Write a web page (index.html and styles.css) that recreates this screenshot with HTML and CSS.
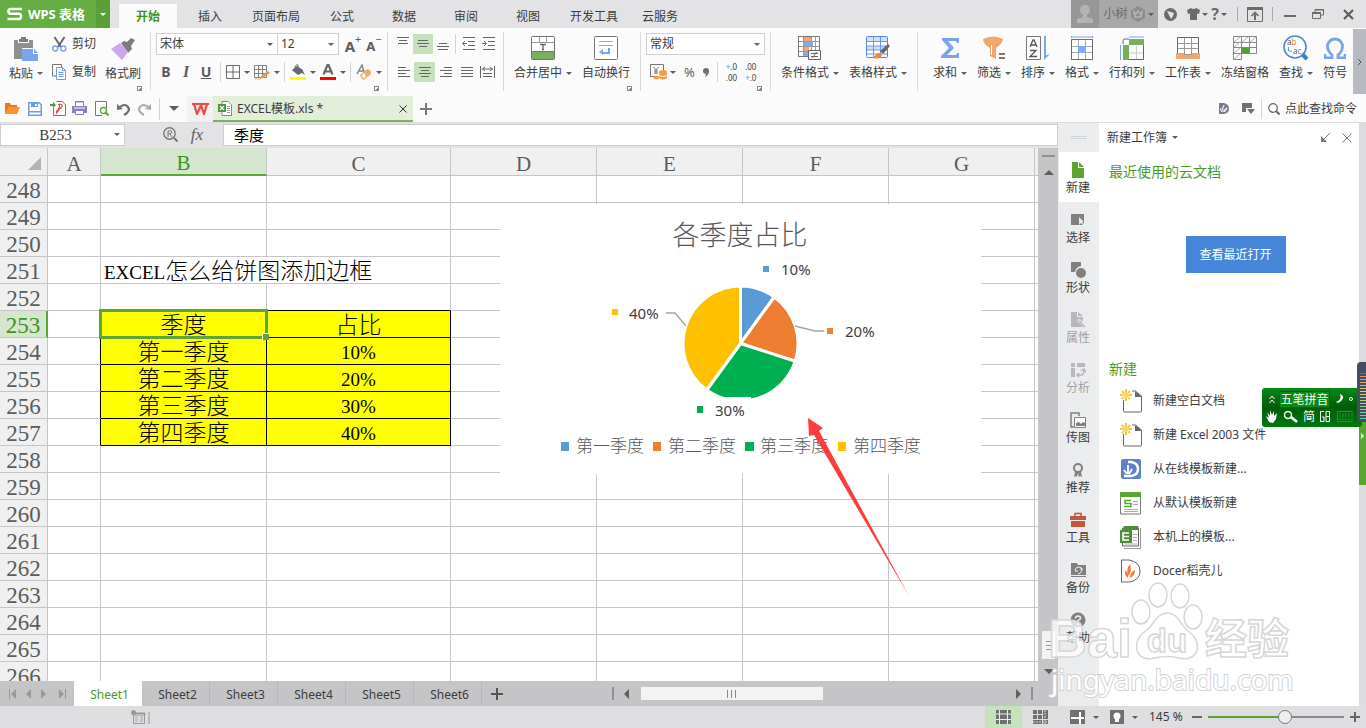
FILE: index.html
```html
<!DOCTYPE html>
<html lang="zh-CN">
<head>
<meta charset="utf-8">
<title>EXCEL模板.xls - WPS 表格</title>
<link rel="stylesheet" href="styles.css">
</head>
<body>
<header class="titlebar">
  <button class="brand"><svg width="16" height="14" viewBox="0 0 16 14"><path d="M15 2H3.500Q1.500 2 1.500 4.300T3.500 6.800H12Q14 6.800 14 9.300T12 12H0.500" fill="none" stroke="#fff" stroke-width="2.600"/></svg><span>WPS 表格</span></button>
  <button class="brand-more" aria-label="菜单"><i class="caret light"></i></button>
  <nav class="menu">
    <button class="active">开始</button><button>插入</button><button>页面布局</button><button>公式</button><button>数据</button><button>审阅</button><button>视图</button><button>开发工具</button><button>云服务</button>
  </nav>
  <div class="window-tools">
    <button class="avatar" aria-label="头像"><svg width="18" height="20" viewBox="0 0 18 20"><circle cx="9" cy="6" r="5" fill="#b4b4b4"/><path d="M7 9h4v4l6 2v4H1v-4l6-2z" fill="#b4b4b4"/></svg></button>
    <button class="user">小树 <svg width="14" height="16" viewBox="0 0 14 16"><path d="M7 0l7 4v8l-7 4-7-4V4z" fill="#8e8e8e"/><path d="M3 6l2 2 2-3 2 3 2-2-1 5H4z" fill="none" stroke="#b5b5b5" stroke-width="1.300"/></svg><i class="caret"></i></button>
    <button class="w20" aria-label="皮肤"><svg width="13" height="13" viewBox="0 0 13 13"><circle cx="6.500" cy="6.500" r="6.500" fill="#6b6b6b"/><path d="M3 3l4 1 3 1-1 3-2 3-2-4z" fill="#e3e3e5"/></svg></button>
    <button class="shirt w24" aria-label="换装"><svg width="13" height="12" viewBox="0 0 13 12"><path d="M4 0Q6.500 2 9 0l4 2-1 4-2-.5V12H3V5.500L1 6 0 2z" fill="#6b6b6b"/></svg><i class="caret"></i></button>
    <button class="w20 help" aria-label="帮助">?<i class="caret"></i></button>
    <i class="bar first"></i>
    <button class="w32" aria-label="收起功能区"><svg width="16" height="15" viewBox="0 0 16 15"><path d="M.5 1h15v13.500H.500z" fill="none" stroke="#6b6b6b"/><path d="M0 0h16v3H0zM7 7h2v6H7z" fill="#6b6b6b"/><path d="M4.500 9L8 5.500 11.500 9" fill="none" stroke="#6b6b6b" stroke-width="1.600"/></svg></button>
    <i class="bar"></i>
    <button class="w32" aria-label="最小化"><svg width="12" height="12" viewBox="0 0 12 12"><path d="M0 7h12v2H0z" fill="#6b6b6b"/></svg></button>
    <button class="w24" aria-label="还原"><svg width="12" height="11" viewBox="0 0 12 11"><path d="M3 3V.500h8.500V6H9M.500 4H8.500v5.500H.500z" fill="none" stroke="#6b6b6b"/><path d="M0 3h9v2H0zM3 0h9v1.500H3z" fill="#6b6b6b"/></svg></button>
    <button class="w36" aria-label="关闭"><svg width="11" height="11" viewBox="0 0 11 11"><path d="M1 1l9 9M10 1l-9 9" stroke="#5e5e5e" stroke-width="2.200"/></svg></button>
  </div>
</header>

<section class="ribbon">
  <div class="group clip">
    <div class="row">
      <button class="big"><span class="ico"><svg width="24" height="24" viewBox="0 0 24 24"><path d="M0 3h4v3h11V3h4v8H8v11H0z" fill="#909090"/><path d="M5 5V2h2V0h5v2h2v3z" fill="#7c7c7c"/><path d="M8 12h11v5h5v7H8z" fill="#7ba4ee"/><path d="M20 12l4 4h-4z" fill="#7ba4ee"/></svg></span><span class="cap">粘贴<i class="caret"></i></span></button>
      <div class="pair">
        <button><svg width="15" height="16" viewBox="0 0 15 16"><path d="M2.500 1l6.500 10M12.500 1L6 11" stroke="#686868" stroke-width="2"/><circle cx="3.200" cy="12.500" r="2.500" fill="none" stroke="#7ba4ee" stroke-width="1.400"/><circle cx="11.300" cy="12.500" r="2.500" fill="none" stroke="#7ba4ee" stroke-width="1.400"/></svg>剪切</button>
        <button><svg width="15" height="16" viewBox="0 0 15 16"><path d="M4 12H.500V.500h9V3" fill="none" stroke="#757575"/><path d="M4.500 3.500h6l3 3v9h-9z" fill="#fff" stroke="#6f9bea"/><path d="M10.500 3.500v3h3M6.500 8.500h5M6.500 10.500h5M6.500 12.500h5" fill="none" stroke="#6f9bea"/></svg>复制</button>
      </div>
      <button class="big"><span class="ico"><svg width="24" height="24" viewBox="0 0 24 24"><path d="M10 6l3-2 3 1 4-4 4 2-4 6 1 3-4 4z" fill="#7c7c7c"/><path d="M9 6l8 9-6 8L0 12z" fill="#cda6f2"/></svg></span><span class="cap">格式刷</span></button>
    </div>
    <button class="launch" aria-label="剪贴板选项"></button>
  </div>
  <i class="sep"></i>
  <div class="group font">
    <div class="rows">
      <div class="row top">
        <label class="pick family"><select aria-label="字体"><option>宋体</option></select><i class="caret"></i></label><label class="pick size"><select aria-label="字号"><option>12</option></select><i class="caret"></i></label>
        <button class="w20 grow"><b>A</b><sup>+</sup></button><button class="w20 shrink"><b>A</b><sup>−</sup></button>
      </div>
      <div class="row tools">
        <span class="biu"><button class="b">B</button><button class="i">I</button><button class="u">U</button></span>
        <i class="bar"></i>
        <button aria-label="边框"><svg width="14" height="14" viewBox="0 0 14 14"><path d="M.5.5h13v13H.5zM7 .5v13M.5 7h13" fill="none" stroke="#6b6b6b"/></svg><i class="caret"></i></button>
        <button aria-label="绘图边框"><svg width="16" height="15" viewBox="0 0 16 15"><path d="M.5.5h12v12H.5zM4.500.500v12M8.500.500v12M.5 4.500h12M.5 8.500h12" fill="none" stroke="#828282"/><path d="M6 14l1-3 7-5 2 2-7 5z" fill="#f09452"/><path d="M1 14h5" stroke="#f09452" stroke-dasharray="2 1"/></svg><i class="caret"></i></button>
        <i class="bar"></i>
        <button aria-label="填充颜色"><svg width="16" height="16" viewBox="0 0 16 16"><path d="M2 6l5-4 6 4v1l2 4-3-2-4 2-5-4z" fill="#686868"/><path d="M5 5q0-5 3-4v4" fill="none" stroke="#686868"/><path d="M0 13h16v3H0z" fill="#ff0"/></svg><i class="caret"></i></button>
        <button aria-label="字体颜色"><svg width="16" height="16" viewBox="0 0 16 16"><path d="M3.500 10.500L7.500 1h1l4 9.500M5 7.500h6" fill="none" stroke="#686868" stroke-width="2.200"/><path d="M0 13h16v3H0z" fill="#f00"/></svg><i class="caret"></i></button>
        <i class="bar"></i>
        <button aria-label="清除格式"><svg width="16" height="16" viewBox="0 0 16 16"><path d="M1 10L6 1l2 7M3 7h4" fill="none" stroke="#858585" stroke-width="1.500"/><path d="M5 11l6-5q4 0 3 4l-6 5q-3-1-3-4z" fill="#fff" stroke="#efac68" stroke-width="1.500"/><path d="M8 8l6-2v4l-4 3z" fill="#efac68"/></svg><i class="caret"></i></button>
      </div>
    </div>
    <button class="launch" aria-label="字体选项"></button>
  </div>
  <i class="sep"></i>
  <div class="group align">
    <div class="rows">
      <div class="row top">
        <button class="w20" aria-label="顶端对齐"><svg width="12" height="14" viewBox="0 0 12 14"><path d="M0 .5h12M2 3.500h8M1 6.500h10" stroke="#666"/></svg></button><button class="w20 on" aria-label="垂直居中"><svg width="12" height="14" viewBox="0 0 12 14"><path d="M1 3.500h10M0 6.500h12M2 9.500h8" stroke="#666"/></svg></button><button class="w20" aria-label="底端对齐"><svg width="12" height="14" viewBox="0 0 12 14"><path d="M2 6.500h8M0 9.500h12M1 12.500h10" stroke="#666"/></svg></button>
        <i class="bar"></i>
        <button class="w20" aria-label="减少缩进"><svg width="13" height="14" viewBox="0 0 13 14"><path d="M1 .5h12M6 4.500h7M6 8.500h7M1 12.500h12M1 6.500h4M3 4L.7 6.500 3 9" fill="none" stroke="#666"/></svg></button><button class="w20" aria-label="增加缩进"><svg width="13" height="14" viewBox="0 0 13 14"><path d="M1 .5h12M6 4.500h7M6 8.500h7M1 12.500h12M0 6.500h4M2 4l2.300 2.500L2 9" fill="none" stroke="#666"/></svg></button>
      </div>
      <div class="row low">
        <button class="w21" aria-label="左对齐"><svg width="12" height="12" viewBox="0 0 12 12"><path d="M0 1.500h8M0 4.500h12M0 7.500h8M0 10.500h12" stroke="#666"/></svg></button><button class="w21 on" aria-label="水平居中"><svg width="12" height="12" viewBox="0 0 12 12"><path d="M0 1.500h12M2 4.500h8M0 7.500h12M2 10.500h8" stroke="#666"/></svg></button><button class="w21" aria-label="右对齐"><svg width="12" height="12" viewBox="0 0 12 12"><path d="M4 1.500h8M0 4.500h12M4 7.500h8M0 10.500h12" stroke="#666"/></svg></button><button class="w21" aria-label="两端对齐"><svg width="12" height="12" viewBox="0 0 12 12"><path d="M0 1.500h12M0 4.500h12M0 7.500h12M0 10.500h12" stroke="#666"/></svg></button><button class="w21" aria-label="分散对齐"><svg width="15" height="12" viewBox="0 0 15 12"><path d="M.5 0v12M14.500 0v12M3 7.500h9M3 10.500h9M2 3h11M5 1L2.500 3 5 5M10 1l2.500 2L10 5" fill="none" stroke="#666"/></svg></button>
      </div>
    </div>
  </div>
  <i class="sep"></i>
  <div class="group merge">
    <div class="row gap10">
      <button class="big"><span class="ico"><svg width="24" height="24" viewBox="0 0 24 24"><rect x=".5" y=".5" width="23" height="23" rx="1" fill="#fff" stroke="#737373"/><path d="M1 6.500h22M8.500 1v5M15.500 1v5" stroke="#999"/><path d="M1 16h22v7H1z" fill="#79ae5c"/><path d="M0 15.500h24" stroke="#5b9039"/><path d="M9 8.500h6M12 8.500v5M11 13.500h2" stroke="#666" stroke-width="1.300"/></svg></span><span class="cap">合并居中<i class="caret"></i></span></button>
      <button class="big"><span class="ico"><svg width="24" height="24" viewBox="0 0 24 24"><rect x=".5" y=".5" width="23" height="23" rx="1" fill="#fff" stroke="#737373"/><path d="M5 5.500h14M5 9.500h14" stroke="#aaa"/><path d="M15 12v5H8" fill="none" stroke="#7ba4ee" stroke-width="2"/><path d="M9 13v6l-4-3z" fill="#7ba4ee"/></svg></span><span class="cap">自动换行</span></button>
    </div>
    <button class="launch" aria-label="对齐选项"></button>
  </div>
  <i class="sep"></i>
  <div class="group number">
    <div class="rows">
      <div class="row top"><label class="pick fmt"><select aria-label="数字格式"><option>常规</option></select><i class="caret"></i></label></div>
      <div class="row numtools">
        <button aria-label="货币"><svg width="17" height="16" viewBox="0 0 17 16"><path d="M5 12.500H.5V.5h13V6" fill="none" stroke="#777"/><path d="M3.500 3L6 6l2.500-3M6 6v4M4 7h4M4 9h4" fill="none" stroke="#777"/><g fill="#f29a3c"><ellipse cx="13" cy="8" rx="4" ry="2"/><path d="M9 9q4 2 8 0v2q-4 2-8 0zM9 12q4 2 8 0v2q-4 3-8 0z"/><ellipse cx="6.500" cy="13.500" rx="3" ry="1.800"/></g></svg><i class="caret"></i></button>
        <button class="pct">%</button>
        <button aria-label="千位分隔"><svg width="6" height="9" viewBox="0 0 6 9"><path d="M3 0q3 0 3 3 0 4-4 6 1-2 1-3Q0 6 0 3t3-3z" fill="#707070"/></svg></button>
        <i class="bar"></i>
        <button class="dec"><span><em>+</em>.0</span><span>.00</span></button>
        <button class="dec"><span>.00</span><span><em>+</em>.0</span></button>
      </div>
    </div>
    <button class="launch" aria-label="数字选项"></button>
  </div>
  <i class="sep"></i>
  <div class="group styles">
    <div class="row gap10">
      <button class="big"><span class="ico"><svg width="24" height="24" viewBox="0 0 24 24"><path d="M.5.5h21v20H.5zM5.500.500v20M13.500.500v20M.5 5.500h21M.5 10.500h21M.5 15.500h21M17.500.500v20" fill="#fff" stroke="#999"/><path d="M6 1h7v4H6zM6 11h5v4H6z" fill="#f7a568"/><path d="M6 6h9v4H6zM6 16h4v4H6z" fill="#7fadf5"/><path d="M.5.5h21v20H.5z" fill="none" stroke="#777"/><path d="M10.500 14.500h12v9h-12z" fill="#fff" stroke="#666"/><path d="M13 17.500h7M13 20.500h7M18.500 16l-4 6" stroke="#666"/></svg></span><span class="cap">条件格式<i class="caret"></i></span></button>
      <button class="big"><span class="ico"><svg width="24" height="24" viewBox="0 0 24 24"><rect x=".5" y=".5" width="21" height="21" rx="1" fill="#fff" stroke="#5486de"/><path d="M1 1h20v4H1zM1 10h20v4H1z" fill="#d2e1fa"/><path d="M7.500 1v20M14.500 1v20M1 5.500h20M1 10h20M1 14h20M1 18h20" stroke="#6d9ae4"/><path d="M14 15l8-7 2 2-7 8z" fill="#686868"/><path d="M7 22q4-6 7-5l2 2q-2 5-9 3z" fill="#ec8a3b"/></svg></span><span class="cap">表格样式<i class="caret"></i></span></button>
    </div>
  </div>
  <i class="sep"></i>
  <div class="group edit">
    <div class="row gap10">
      <button class="big"><span class="ico"><svg width="19" height="22" viewBox="0 0 19 22"><path d="M1 1h17v5h-2q0-2-3-2H7l6 7-7 7h7q3 0 3-2h2v5H0v-2l8-8L1 3z" fill="#7ba4ee"/></svg></span><span class="cap">求和<i class="caret"></i></span></button>
      <button class="big"><span class="ico"><svg width="23" height="24" viewBox="0 0 23 24"><path d="M0 3q10-5 20 0 0 4-7 9v11l-6-3V12Q0 8 0 3z" fill="#f1a66b"/><path d="M8.500 9v10" stroke="#fff"/><path d="M16 17h6v2h-6zM16 21h6v2h-6z" fill="#777"/></svg></span><span class="cap">筛选<i class="caret"></i></span></button>
      <button class="big"><span class="ico"><svg width="24" height="24" viewBox="0 0 24 24"><path d="M.5.500h14v23H.500z" fill="#fff" stroke="#777"/><path d="M4 11l3-7h1l3 7M5 9h5M4 14.500h6L4 20.500h7" fill="none" stroke="#555" stroke-width="1.300"/><path d="M19 0v22" stroke="#7ba4ee" stroke-width="2"/><path d="M18 24v-4l6-2z" fill="#7ba4ee"/></svg></span><span class="cap">排序<i class="caret"></i></span></button>
      <button class="big"><span class="ico"><svg width="22" height="24" viewBox="0 0 22 24"><path d="M.5 3.500h21v20H.5zM7.500 3.500v20M14.500 3.500v20M.5 10.500h21M.5 16.500h21" fill="#fff" stroke="#aaa"/><path d="M.5 3.500h21v20H.5z" fill="none" stroke="#6d6d6d"/><path d="M7 10h8v7H7z" fill="#7fadf5"/><path d="M0 1h22M.5 0v2M21.500 0v2" stroke="#7ba4ee"/></svg></span><span class="cap">格式<i class="caret"></i></span></button>
      <button class="big"><span class="ico"><svg width="24" height="24" viewBox="0 0 24 24"><path d="M3 8V5q0-2 2-2h4M23.500 9v14.500H9" fill="none" stroke="#666"/><path d="M9 17h14M16.500 10v13" stroke="#ccc"/><path d="M9 3h15v6H9zM3 9h6v15H3z" fill="#79ae5c"/><path d="M9 1h15M.500 9v15" stroke="#7ba4ee"/></svg></span><span class="cap">行和列<i class="caret"></i></span></button>
      <button class="big"><span class="ico"><svg width="24" height="24" viewBox="0 0 24 24"><path d="M1.500 1.500h21v17h-21zM8.500 1v17M15.500 1v17M1.500 7.500h21M1.500 12.500h21" fill="#fff" stroke="#999"/><path d="M1.500 18V1.500h21V18" fill="none" stroke="#666"/><path d="M0 17h8v2h8v-2h8v6H0z" fill="#f1a66b"/></svg></span><span class="cap">工作表<i class="caret"></i></span></button>
      <button class="big"><span class="ico"><svg width="24" height="24" viewBox="0 0 24 24"><path d="M.5 23.500V.500h23v17H8.500v6zM8.500.500v17M16.500.500v17M.5 6.500h23M.5 11.500h23M.500 17.500h8" fill="#fff" stroke="#888"/><path d="M1 6l6-5M9 6l6-5M17 6l6-5M1 11l6-5M1 17l6-5M1 23l6-5" stroke="#aaa"/><path d="M9 12h7v5H9z" fill="#5c9a3c"/></svg></span><span class="cap">冻结窗格</span></button>
      <button class="big"><span class="ico"><svg width="26" height="26" viewBox="0 0 26 26"><circle cx="12" cy="12" r="11" fill="#fff" stroke="#4a87dc" stroke-width="1.600"/><path d="M19 19l5 5" stroke="#3d7fd8" stroke-width="4"/><text x="4" y="10" font-size="8" fill="#555">a<tspan fill="#e08438">b</tspan></text><text x="10" y="19" font-size="8" fill="#555">a<tspan fill="#5b8de0">c</tspan></text><path d="M5.500 12v4H9" fill="none" stroke="#5b8de0"/></svg></span><span class="cap">查找<i class="caret"></i></span></button>
      <button class="big"><span class="ico"><svg width="22" height="22" viewBox="0 0 22 22"><path d="M1 17v4h7v-3Q3 14 3.500 8q2-6 7.500-6t7.500 6q.5 6-4.500 10v3h7v-4" fill="none" stroke="#7ba4ee" stroke-width="2.800"/></svg></span><span class="cap">符号</span></button>
    </div>
  </div>
  <button class="ribbon-next" aria-label="更多"><svg width="5" height="8" viewBox="0 0 5 8"><path d="M1 1l3 3-3 3" fill="none" stroke="#555"/></svg></button>
</section>

<section class="quick">
  <div class="quick-icons">
    <button aria-label="打开"><svg width="15" height="13" viewBox="0 0 15 13"><path d="M0 12V1h5l1 2h6v3H4z" fill="#e77a1e"/><path d="M4 5h11l-3 7H0z" fill="#f8932f"/></svg></button>
    <button aria-label="保存"><svg width="14" height="14" viewBox="0 0 14 14"><path d="M.75.750h10.500l2 2v10.500H.750z" fill="#fff" stroke="#6e9aea" stroke-width="1.500"/><path d="M3 1h7v4H3zM1 9h12v1.500H1z" fill="#6e9aea"/><path d="M7 2h2v2H7z" fill="#fff"/></svg></button>
    <button aria-label="输出PDF"><svg width="16" height="15" viewBox="0 0 16 15"><path d="M3.500 7v7.500h12V4l-3-3.500h-6" fill="#fff" stroke="#777"/><path d="M0 3h3V1l3 3-3 3V5H0z" fill="#579a38"/><path d="M8 3.500q5-1 4 2T8 7.500M9.500 4q0 5-3 8 0-4 3-3" fill="none" stroke="#d74b46" stroke-width="1.200"/></svg></button>
    <button aria-label="打印"><svg width="15" height="15" viewBox="0 0 15 15"><path d="M3 0h9v5h3v7H0V5h3z" fill="#8380c8"/><path d="M4 1.500h7V5H4zM3 9h9v5H3z" fill="#fff"/><path d="M3.500 9.500h8v4h-8z" fill="#fff" stroke="#8380c8"/><path d="M2 7h11" stroke="#fff"/></svg></button>
    <button aria-label="打印预览"><svg width="14" height="15" viewBox="0 0 14 15"><path d="M7 14.500H.5V.5h11V7" fill="#fff" stroke="#777"/><circle cx="8.500" cy="9.500" r="3" fill="#fff" stroke="#5fa13e" stroke-width="1.300"/><path d="M10.500 11.500L13.500 14.500" stroke="#5fa13e" stroke-width="2"/></svg></button>
    <button aria-label="撤销"><svg width="13" height="14" viewBox="0 0 13 14"><path d="M3 5q5-4 8 0t-4 8" fill="none" stroke="#707070" stroke-width="2.200"/><path d="M0 2l6 5-6 1z" fill="#707070"/></svg></button>
    <button aria-label="恢复"><svg width="13" height="14" viewBox="0 0 13 14"><path d="M10 5Q5 1 2 5t4 8" fill="none" stroke="#adadad" stroke-width="2.200"/><path d="M13 2L7 7l6 1z" fill="#adadad"/></svg></button>
  </div>
  <i class="bar tall"></i>
  <button class="more" aria-label="自定义"><i class="caret large"></i></button>
  <button class="home" aria-label="WPS 首页"><svg width="17" height="12" viewBox="0 0 17 12"><path d="M0 1h8M8 1h9M2 1l3 10 4-9 3 9 3-10" fill="none" stroke="#ea4b49" stroke-width="2.200"/></svg></button>
  <div class="doc"><svg width="14" height="15" viewBox="0 0 14 15"><path d="M4 .5h6l3.500 3.500v10.500H4z" fill="#fff" stroke="#888"/><path d="M9 5.500h3M9 7.500h3M9 9.500h3M9 11.500h3" stroke="#999"/><path d="M0 3h8v8H0z" fill="#4b9638"/><path d="M2 5l4 4M6 5l-4 4" stroke="#fff" stroke-width="1.300"/></svg><span>EXCEL模板.xls *</span><button aria-label="关闭文档"><svg width="8" height="8" viewBox="0 0 8 8"><path d="M.5.5l7 7M7.500.500l-7 7" stroke="#333"/></svg></button></div>
  <button class="plus" aria-label="新建标签"><svg width="12" height="12" viewBox="0 0 12 12"><path d="M5 0h2v5h5v2H7v5H5V7H0V5h5z" fill="#7a7a7a"/></svg></button>
  <div class="find">
    <button aria-label="Docer"><svg width="10" height="11" viewBox="0 0 10 11"><path d="M0 0h5q5 1 5 5.500T5 11H0z" fill="#787d90"/><path d="M3 9Q1 7 2 5M4 9q-1-4 1-7M5 9q0-3 3-4-1 3-3 4" fill="none" stroke="#fff"/></svg></button>
    <button aria-label="窗口"><svg width="13" height="11" viewBox="0 0 13 11"><path d="M0 0h10v5H4v4H0z" fill="#707070"/><path d="M5 6h8l-4 5z" fill="#707070"/></svg></button>
    <i class="bar"></i>
    <button class="search"><svg width="12" height="12" viewBox="0 0 12 12"><circle cx="5" cy="5" r="4.300" fill="none" stroke="#666" stroke-width="1.200"/><path d="M8 8l3.500 3.500" stroke="#666" stroke-width="2"/></svg>点此查找命令</button>
  </div>
</section>

<main class="work">
  <div class="book">
    <div class="formula">
      <label class="namebox"><input aria-label="名称框" value="B253"><i class="caret"></i></label>
      <button aria-label="查找引用"><svg width="15" height="15" viewBox="0 0 15 15"><circle cx="6.500" cy="6.500" r="5.700" fill="none" stroke="#777" stroke-width="1.400"/><path d="M11 11l3.500 3.500" stroke="#777" stroke-width="2"/><path d="M5 10V4q4-1 4 1T5 7M7 7l2 3" fill="none" stroke="#777"/></svg></button>
      <button class="fx">fx</button>
      <input class="fxinput" aria-label="编辑栏" value="季度">
    </div>
    <div class="sheetrow">
      <div class="sheet">
        <table class="grid">
          <colgroup><col class="c-num"><col class="c-a"><col class="c-b"><col class="c-c"><col class="c-d"><col class="c-d"><col class="c-d"><col class="c-d"><col></colgroup>
          <thead><tr><th class="corner"><svg width="13" height="13" viewBox="0 0 13 13"><path d="M13 0v13H0z" fill="#b4b4b4"/></svg></th><th>A</th><th class="sel">B</th><th>C</th><th>D</th><th>E</th><th>F</th><th>G</th><th></th></tr></thead>
          <tbody>
          <tr><th>248</th><td></td><td></td><td></td><td></td><td></td><td></td><td></td><td></td></tr>
          <tr><th>249</th><td></td><td></td><td></td><td></td><td></td><td></td><td></td><td></td></tr>
          <tr><th>250</th><td></td><td></td><td></td><td></td><td></td><td></td><td></td><td></td></tr>
          <tr><th>251</th><td></td><td class="long" colspan="2"><span class="latin">EXCEL</span>怎么给饼图添加边框</td><td></td><td></td><td></td><td></td><td></td></tr>
          <tr class="before"><th>252</th><td></td><td></td><td></td><td></td><td></td><td></td><td></td><td></td></tr>
          <tr class="fill"><th class="sel">253</th><td></td><td class="cur">季度</td><td>占比</td><td></td><td></td><td></td><td></td><td></td></tr>
          <tr class="fill"><th>254</th><td></td><td>第一季度</td><td class="n">10%</td><td></td><td></td><td></td><td></td><td></td></tr>
          <tr class="fill"><th>255</th><td></td><td>第二季度</td><td class="n">20%</td><td></td><td></td><td></td><td></td><td></td></tr>
          <tr class="fill"><th>256</th><td></td><td>第三季度</td><td class="n">30%</td><td></td><td></td><td></td><td></td><td></td></tr>
          <tr class="fill"><th>257</th><td></td><td>第四季度</td><td class="n">40%</td><td></td><td></td><td></td><td></td><td></td></tr>
          <tr><th>258</th><td></td><td></td><td></td><td></td><td></td><td></td><td></td><td></td></tr>
          <tr><th>259</th><td></td><td></td><td></td><td></td><td></td><td></td><td></td><td></td></tr>
          <tr><th>260</th><td></td><td></td><td></td><td></td><td></td><td></td><td></td><td></td></tr>
          <tr><th>261</th><td></td><td></td><td></td><td></td><td></td><td></td><td></td><td></td></tr>
          <tr><th>262</th><td></td><td></td><td></td><td></td><td></td><td></td><td></td><td></td></tr>
          <tr><th>263</th><td></td><td></td><td></td><td></td><td></td><td></td><td></td><td></td></tr>
          <tr><th>264</th><td></td><td></td><td></td><td></td><td></td><td></td><td></td><td></td></tr>
          <tr><th>265</th><td></td><td></td><td></td><td></td><td></td><td></td><td></td><td></td></tr>
          <tr><th>266</th><td></td><td></td><td></td><td></td><td></td><td></td><td></td><td></td></tr>
          </tbody>
        </table>
        <svg class="chart" width="481" height="270" viewBox="0 0 481 270" role="img" aria-label="各季度占比">
          <rect width="481" height="270" fill="#fff"/>
          <text x="240" y="41" text-anchor="middle" font-size="27" fill="#595959">各季度占比</text>
          <g stroke="#fff" stroke-width="3" stroke-linejoin="round">
            <path d="M240.500 139.500V82A57.500 57.500 0 0 1 274.300 93z" fill="#5b9bd5"/>
            <path d="M240.500 139.500L274.300 93A57.500 57.500 0 0 1 295.200 157.300z" fill="#ed7d31"/>
            <path d="M240.500 139.500L295.200 157.300A57.500 57.500 0 0 1 206.700 186z" fill="#00b050"/>
            <path d="M240.500 139.500L206.700 186A57.500 57.500 0 0 1 240.500 82z" fill="#ffc000"/>
          </g>
          <rect x="196" y="193" width="55" height="24" fill="#fff"/>
          <path d="M166 109h9l11 13M295 122l20 5h9" fill="none" stroke="#a6a6a6" stroke-width="1.400"/>
          <path d="M263 62h6v6h-6z" fill="#5b9bd5"/><path d="M327 124h6v6h-6z" fill="#ed7d31"/><path d="M197 202h6v7h-6z" fill="#00b050"/><path d="M112 105h6v6h-6z" fill="#ffc000"/>
          <g class="labels" font-size="15" fill="#404040"><text x="281" y="71">10%</text><text x="345" y="133">20%</text><text x="215" y="212">30%</text><text x="129" y="115">40%</text></g>
          <path d="M61 238h8v9h-8z" fill="#5b9bd5"/><path d="M153 238h8v9h-8z" fill="#ed7d31"/><path d="M245 238h9v9h-9z" fill="#00b050"/><path d="M338 238h8v9h-8z" fill="#ffc000"/>
          <g font-size="17" fill="#595959"><text x="76" y="248">第一季度</text><text x="168" y="248">第二季度</text><text x="260" y="248">第三季度</text><text x="353" y="248">第四季度</text></g>
        </svg>
        <svg class="arrow" width="104" height="180" viewBox="0 0 104 180"><path d="M1 0l15 10-4 3 90 165-95-161-5 1z" fill="#fb3d3d"/></svg>
      </div>
      <div class="vscroll"><i class="split"></i><button aria-label="向上"><i class="tri up"></i></button><span class="vthumb"><i></i><i></i><i></i></span><button aria-label="向下"><i class="tri down"></i></button></div>
    </div>
    <div class="tabs">
      <div class="tabnav">
        <button aria-label="第一张"><svg width="8" height="10" viewBox="0 0 8 10"><path d="M0 0h1v10H0zM7 0v10L2 5z" fill="#999"/></svg></button><button aria-label="上一张"><svg width="6" height="10" viewBox="0 0 6 10"><path d="M5 0v10L0 5z" fill="#999"/></svg></button><button aria-label="下一张"><svg width="6" height="10" viewBox="0 0 6 10"><path d="M0 0v10l5-5z" fill="#999"/></svg></button><button aria-label="最后一张"><svg width="8" height="10" viewBox="0 0 8 10"><path d="M0 0v10l5-5zM6 0h1v10H6z" fill="#999"/></svg></button>
      </div>
      <button class="tab active">Sheet1</button><button class="tab">Sheet2</button><button class="tab">Sheet3</button><button class="tab">Sheet4</button><button class="tab">Sheet5</button><button class="tab">Sheet6</button>
      <button class="addtab" aria-label="新建工作表"><svg width="12" height="12" viewBox="0 0 12 12"><path d="M5 0h2v5h5v2H7v5H5V7H0V5h5z" fill="#555"/></svg></button>
      <div class="hscroll"><i class="grip"></i><button aria-label="向左"><i class="tri left"></i></button><span class="track"><span class="hthumb"><i></i><i></i><i></i></span></span><button aria-label="向右"><i class="tri right"></i></button><i class="grip"></i></div>
    </div>
  </div>
  <nav class="strip">
    <div class="handle"><i></i></div>
    <button class="active"><svg width="12" height="16" viewBox="0 0 12 16"><path d="M0 0h6v6h6v10H0zM7 0l5 5H7z" fill="#5aa532"/></svg>新建</button>
    <button><svg width="14" height="16" viewBox="0 0 14 16"><path d="M0 2h13v11H0z" fill="#808080"/><path d="M8 5v8l2-2 3 3 1-1-3-3h2z" fill="#ebeced"/></svg>选择</button>
    <button><svg width="15" height="16" viewBox="0 0 15 16"><path d="M0 0h10v4q-5 1-6 6H0z" fill="#808080"/><circle cx="10" cy="11" r="5" fill="#808080"/></svg>形状</button>
    <button disabled><svg width="15" height="16" viewBox="0 0 15 16"><path d="M0 0h6v5h6v10H0zM7 0l5 4H7z" fill="#b8b8ba"/><path d="M7 9q2-1 3 1l4 5" fill="none" stroke="#ebeced" stroke-width="3"/><path d="M8 9q2 0 2 2l4 4" fill="none" stroke="#b8b8ba" stroke-width="1.500"/></svg>属性</button>
    <button disabled><svg width="15" height="16" viewBox="0 0 15 16"><path d="M0 1h4v4H0zM6 1h8v4H6zM0 6h4v9H0z" fill="#b8b8ba"/><path d="M6 13h4q3 0 3-5M10 9l3-2 2 3M8 11l-2 2 2 2" fill="none" stroke="#b8b8ba" stroke-width="1.500"/></svg>分析</button>
    <button><svg width="16" height="16" viewBox="0 0 16 16"><path d="M4 15H1V1h8v3" fill="none" stroke="#808080" stroke-width="1.500"/><path d="M4.500 5.500h11v10h-11z" fill="#fff" stroke="#808080"/><path d="M6 14v-3l3-1 2 2 2-2 2 1v3z" fill="#808080"/></svg>传图</button>
    <button><svg width="12" height="16" viewBox="0 0 12 16"><circle cx="6" cy="6" r="4" fill="none" stroke="#808080" stroke-width="2"/><path d="M3 10l-1 5 2-1 1 1 1-4 1 4 1-1 2 1-1-5z" fill="#808080"/></svg>推荐</button>
    <button><svg width="16" height="16" viewBox="0 0 16 16"><path d="M0 4h16v4H0zM1 9h14v6H1z" fill="#bf593d"/><path d="M5 4V1.500h6V4" fill="none" stroke="#bf593d" stroke-width="1.500"/></svg>工具</button>
    <button><svg width="15" height="16" viewBox="0 0 15 16"><path d="M0 1h6l1 2h8v10H0zM0 14h15v1H0z" fill="#808080"/><path d="M4 9q0-4 4-4 3 0 3 3M11 8q-1 4-4 4M9 7h3M4 9l3 0" fill="none" stroke="#ebeced"/></svg>备份</button>
    <button><svg width="16" height="16" viewBox="0 0 16 16"><circle cx="8" cy="8" r="7.500" fill="#808080"/><path d="M5.500 6.500Q5.500 4 8 4t2.500 2.300Q10.500 7.500 8 8.500V10M8 11v2" fill="none" stroke="#ebeced" stroke-width="1.600"/></svg>帮助</button>
  </nav>
  <aside class="panel">
    <div class="panel-head"><button>新建工作簿<i class="caret"></i></button><span><button aria-label="浮动"><svg width="9" height="9" viewBox="0 0 9 9"><path d="M9 0L2 7" stroke="#777"/><path d="M0 3v6h6z" fill="#777"/></svg></button><button aria-label="关闭面板"><svg width="10" height="10" viewBox="0 0 10 10"><path d="M.5.500l9 9M9.500.500l-9 9" stroke="#777"/></svg></button></span></div>
    <h2>最近使用的云文档</h2>
    <button class="recent">查看最近打开</button>
    <h2>新建</h2>
    <ul class="newlist">
      <li><button><svg width="24" height="26" viewBox="0 0 24 26"><path d="M3.500 12v11q0 1 1 1h16q1 0 1-1V8l-6-5H12" fill="#fff" stroke="#666"/><path d="M15 3l7 6h-7z" fill="#666"/><path d="M6 1v12M0 7h12M2 3l8 8M10 3l-8 8" stroke="#f8c544" stroke-width="2" stroke-dasharray="3 6 3"/><circle cx="6" cy="7" r="3" fill="#fbd46b"/></svg>新建空白文档</button></li>
      <li><button><svg width="24" height="26" viewBox="0 0 24 26"><path d="M3.500 12v11q0 1 1 1h16q1 0 1-1V8l-6-5H12" fill="#fff" stroke="#666"/><path d="M15 3l7 6h-7z" fill="#666"/><path d="M6 1v12M0 7h12M2 3l8 8M10 3l-8 8" stroke="#f8c544" stroke-width="2" stroke-dasharray="3 6 3"/><circle cx="6" cy="7" r="3" fill="#fbd46b"/></svg>新建 Excel 2003 文件</button></li>
      <li><button><svg width="24" height="26" viewBox="0 0 24 26"><rect x="1" y="3" width="20" height="20" rx="2" fill="#5f82c6"/><path d="M8 6h3q7 1 7 7t-7 7H4" fill="none" stroke="#fff" stroke-width="2.500"/><path d="M7 18l-3-4M8 18V9M9 18l3-5" stroke="#fff" stroke-width="1.800"/></svg>从在线模板新建...</button></li>
      <li><button><svg width="24" height="26" viewBox="0 0 24 26"><path d="M.5 3h20v21H.5z" fill="#fff" stroke="#777"/><path d="M0 2h21v5H0z" fill="#5aa532"/><path d="M11 10.500H5v3h6v3H4" fill="none" stroke="#5aa532" stroke-width="1.500"/><path d="M13 11.500h5M13 14.500h5M4 19.500h14M4 21.500h14" stroke="#aaa"/></svg>从默认模板新建</button></li>
      <li><button><svg width="24" height="26" viewBox="0 0 24 26"><path d="M4 24.500h16.500V4" fill="none" stroke="#999"/><path d="M2.500 4h16v18h-16z" fill="#fff" stroke="#666"/><path d="M4 2h14l1 4H3zM0 6h12v13H0z" fill="#4b8e3a"/><path d="M9 9H3v7h6M3 12.500h6" fill="none" stroke="#fff" stroke-width="1.600"/><path d="M13 10.500h4M13 13.500h4M13 16.500h4M5 20h12" stroke="#aaa"/></svg>本机上的模板...</button></li>
      <li><button><svg width="24" height="26" viewBox="0 0 24 26"><path d="M1.500 2H9q11 2 11 11T10 24H1.500z" fill="#fff" stroke="#666"/><path d="M9 18Q5 12 10 6q2 6-1 12zM8 20q-4-3-3-8 4 3 3 8zM10 20q0-6 5-8 0 6-5 8z" fill="#f47b38"/></svg>Docer稻壳儿</button></li>
    </ul>
  </aside>
  <div class="edge"><button aria-label="展开"><i></i></button></div>
</main>

<footer class="status">
  <button class="macro" aria-label="录制宏"><svg width="19" height="14" viewBox="0 0 19 14"><path d="M2.500 3.500h11v10h-11zM2 3h12v2H2z" fill="none" stroke="#999"/><circle cx="2.500" cy="2.500" r="2.500" fill="#999"/><path d="M4 7h3M9 7h3M4 9h3M9 9h3M4 11h3M9 11h3" stroke="#aaa"/><path d="M18 2v12" stroke="#999"/></svg></button>
  <div class="views">
    <button class="on" aria-label="普通视图"><svg width="15" height="14" viewBox="0 0 15 14"><path d="M0 0h15v14H0z" fill="#707070"/><path d="M0 4h15M0 9.500h15M3.500 0v14M11.500 0v14" stroke="#e4f2de"/></svg></button>
    <button aria-label="分页预览"><svg width="15" height="14" viewBox="0 0 15 14"><path d="M0 0h15v14H0z" fill="#707070"/><path d="M0 4.500h9M4.500 0v9M0 9.500h15M9.500 0v14" stroke="#dedee0"/><path d="M12 0v14M0 12h15" stroke="#dedee0" stroke-dasharray="2 1"/></svg></button>
    <button aria-label="阅读模式"><svg width="15" height="14" viewBox="0 0 15 14"><path d="M0 0h15v14H0z" fill="#707070"/><path d="M1 8h13M10 2v12" stroke="#fff" stroke-width="2"/></svg><i class="caret"></i></button>
    <button aria-label="护眼模式"><svg width="14" height="14" viewBox="0 0 14 14"><path d="M0 0h14v14H0z" fill="#707070"/><circle cx="7" cy="6" r="3.500" fill="#fff"/><path d="M5 8h4v4H5z" fill="#fff"/></svg><i class="caret"></i></button>
  </div>
  <div class="zoom"><output>145 %</output><button aria-label="缩小"><svg width="10" height="10" viewBox="0 0 10 10"><path d="M0 4h10v2H0z" fill="#666"/></svg></button><input type="range" min="0" max="100" value="57" aria-label="缩放"><button aria-label="放大"><svg width="10" height="10" viewBox="0 0 10 10"><path d="M4 0h2v4h4v2H6v4H4V6H0V4h4z" fill="#666"/></svg></button></div>
</footer>

<div class="ime">
  <svg class="chev" width="6" height="9" viewBox="0 0 6 9"><path d="M.5 4L3 1l2.500 3M.5 8L3 5l2.500 3" fill="none" stroke="#fff"/></svg>
  <span class="mode">五笔拼音</span>
  <svg width="18" height="10" viewBox="0 0 18 10"><path d="M4 0q5 2 2 6t-6 2q6-2 4-8z" fill="#fff"/><circle cx="15" cy="5" r="1.500" fill="none" stroke="#fff"/></svg>
  <svg class="hand" width="12" height="13" viewBox="0 0 12 13"><path d="M3 12L0 6l3 2-2-6 3 4V0l2 5 2-4v5l3-3-1 6-3 4z" fill="#fff"/></svg>
  <span class="imerow"><svg width="15" height="12" viewBox="0 0 15 12"><circle cx="5" cy="4" r="3.500" fill="none" stroke="#fff" stroke-width="1.500"/><path d="M8 6l6 5" stroke="#fff" stroke-width="2.500"/></svg>简<svg width="10" height="11" viewBox="0 0 10 11"><path d="M4 .500H.500v10H4V6H2M6 .500h3.500v10H6zM6 5.500h3.500" fill="none" stroke="#fff"/></svg></span>
  <svg width="16" height="11" viewBox="0 0 16 11"><path d="M.5.500h18v10H.500z" fill="none" stroke="#1f9a24"/><path d="M2 3h14M2 5h14M2 8h14" stroke="#1f9a24" stroke-dasharray="2 1"/></svg>
</div>
<div class="meter"></div>

<svg class="mark" width="250" height="120" viewBox="0 0 250 120" aria-hidden="true">
  <g fill="#fff" fill-opacity=".75" stroke="#d6d6d6" stroke-width="1.500">
    <ellipse cx="93" cy="30" rx="9" ry="12"/><ellipse cx="110" cy="13" rx="9" ry="12"/><ellipse cx="132" cy="14" rx="9" ry="12"/><ellipse cx="145" cy="35" rx="9" ry="12"/>
    <path d="M119 31c-10 0-12 10-19 16-8 6-13 11-11 21 2 8 10 10 18 8q12-3 24 0c8 2 16 0 18-8 2-10-4-15-11-21-7-7-9-16-19-16z"/>
    <text class="bd" x="0" y="75" font-size="54">Bai</text><text class="bd" x="119" y="70" font-size="33" text-anchor="middle">du</text>
    <text class="bd" x="157" y="72" font-size="42">经验</text>
  </g>
  <text class="url" x="3" y="108" font-size="28">jingyan.baidu.com</text>
</svg>
</body>
</html>
```
FILE: styles.css
```css
* { box-sizing: border-box; }
html, body { height: 100%; }
body {
  margin: 0;
  display: flex;
  flex-direction: column;
  overflow: hidden;
  position: relative;
  background: #dedee0;
  color: #3c3c3c;
  font: 12px/16px "Noto Sans", "Noto Sans CJK SC", sans-serif;
}
button, input, select { font: inherit; color: inherit; }
button {
  display: flex;
  align-items: center;
  justify-content: center;
  flex: none;
  margin: 0;
  padding: 0;
  border: 0;
  background: none;
  white-space: nowrap;
}
svg { display: block; flex: none; }

.caret {
  flex: none;
  border: 3px solid transparent;
  border-top-color: #5e5e5e;
  border-bottom: 0;
}
.caret.light { border-top-color: #fff; }
.caret.large { border-width: 5px 5px 0; }
.bar { flex: none; width: 1px; height: 20px; background: #d3d3d5; }
.w20 { width: 20px; }
.w21 { width: 21px; }
.w24 { width: 24px; }
.w32 { width: 32px; }
.w36 { width: 36px; }
.on { background: #c6e2ba; }

/* title bar */
.titlebar { display: flex; flex: none; height: 28px; background: #e3e3e5; }
.brand {
  width: 96px;
  gap: 5px;
  padding-right: 4px;
  background: #66ad44;
  color: #fff;
  font-size: 13px;
  font-weight: 700;
}
.brand-more { width: 14px; background: #5a9f39; }
.menu { display: flex; flex: 1; margin-left: 7px; }
.menu button {
  min-width: 62px;
  padding: 5px 11px 0;
}
.menu .active {
  min-width: 58px;
  margin: 4px 2px 0;
  padding-top: 1px;
  background: #fbfbfb;
  color: #3f931a;
  font-weight: 700;
}
.window-tools { display: flex; flex: none; align-items: center; }
.window-tools button { height: 28px; gap: 2px; }
.window-tools .avatar { width: 28px; background: #979797; }
.window-tools .user { width: 59px; gap: 3px; margin-right: 2px; background: #a8a8a8; color: #6b6b6b; }
.window-tools .bar { height: 14px; margin: 0 1px; background: #aaa; }
.window-tools .first { margin-left: 8px; }
.window-tools .shirt { margin-left: 5px; }
.help { font-size: 16px; font-weight: 700; color: #6b6b6b; }

/* ribbon */
.ribbon { display: flex; flex: none; height: 67px; background: #fbfbfb; }
.sep { flex: none; width: 1px; margin: 4px 0; background: #dadadc; }
.group { display: flex; flex: none; flex-direction: column; justify-content: space-between; padding: 4px 0; }
.row { display: flex; }
.gap10 { gap: 10px; }
.rows { display: flex; flex-direction: column; gap: 6px; padding-top: 1px; }
.big { flex-direction: column; gap: 3px; padding-top: 2px; }
.ico { display: flex; align-items: center; height: 28px; }
.cap { display: flex; align-items: center; gap: 4px; }
.pair { display: flex; flex-direction: column; gap: 8px; padding-top: 2px; }
.pair button { gap: 5px; height: 20px; }
.launch {
  align-self: flex-end;
  width: 5px;
  height: 5px;
  margin-right: 8px;
  border: 1px solid #888;
  border-width: 1px 0 0 1px;
  background: linear-gradient(135deg, transparent 50%, #888 50%);
}
.clip { width: 150px; padding-left: 9px; }
.clip .row { gap: 9px; }
.font { width: 236px; padding-left: 5px; }
.top { align-items: center; height: 22px; }
.top button { height: 20px; }
.pick { display: flex; align-items: center; height: 22px; padding-right: 4px; border: 1px solid #d0d0d2; background: #fff; }
.pick select { flex: 1; min-width: 0; padding: 0 0 0 3px; border: 0; background: none; appearance: none; }
.family { width: 122px; }
.size { width: 62px; margin-left: -1px; }
.grow, .shrink { align-items: flex-start; color: #5c5c5c; }
.grow { margin-left: 4px; font-size: 15px; }
.shrink { margin-left: 1px; font-size: 13px; }
.grow b, .shrink b { padding-top: 4px; }
.grow sup, .shrink sup { font-size: 11px; line-height: 9px; }
.tools { align-items: center; gap: 4px; height: 22px; }
.tools button { gap: 4px; }
.tools .bar + button { margin-left: 1px; }
.biu { display: flex; }
.biu button { width: 20px; font-size: 14px; font-weight: 700; color: #5c5c5c; }
.biu .i { font-family: "Liberation Serif", serif; font-style: italic; font-size: 16px; }
.biu .u { text-decoration: underline; }
.align { width: 115px; padding-left: 5px; }
.align .top .bar { margin: 0 2px; }
.low { align-items: center; height: 22px; }
.low button { height: 20px; }
.merge { width: 136px; padding-left: 10px; }
.number { width: 129px; padding-left: 5px; }
.fmt { width: 119px; }
.numtools { align-items: center; gap: 8px; height: 22px; padding-left: 4px; }
.numtools button { gap: 3px; }
.pct { font-size: 13px; color: #606060; }
.dec { flex-direction: column; align-items: flex-end; font-size: 8px; line-height: 8px; }
.dec em { color: #5b8de0; font-style: normal; }
.styles { width: 146px; padding-left: 10px; }
.edit { flex: 1; min-width: 0; padding-left: 15px; overflow: hidden; }
.ribbon-next { width: 13px; height: 65px; margin-top: 1px; background: #b8bac2; }

/* quick access and document tabs */
.quick { display: flex; flex: none; align-items: center; height: 27px; background: #fbfbfb; }
.quick-icons { display: flex; align-items: center; gap: 8px; width: 159px; padding-left: 5px; }
.quick-icons button:nth-child(3) { margin-right: -2px; }
.tall { height: 22px; }
.more { width: 27px; }
.home { width: 26px; height: 26px; background: #f1f1f2; }
.doc {
  display: flex;
  align-items: center;
  gap: 5px;
  width: 200px;
  height: 26px;
  padding: 2px 6px 0 5px;
  border-bottom: 2px solid #7cb45e;
  background: #e2edda;
}
.doc span { flex: 1; }
.plus { width: 26px; }
.find { display: flex; align-items: center; gap: 6px; margin-left: auto; padding-right: 9px; }
.find button:nth-child(2) { margin-left: 7px; }
.find .search { gap: 5px; }

/* workspace */
.work { display: flex; flex: 1; min-height: 0; border-top: 1px solid #dcdcde; }
.book { display: flex; flex: 1; flex-direction: column; min-width: 0; }
.formula { display: flex; flex: none; align-items: center; height: 25px; padding-bottom: 2px; background: #e3e3e5; }
.namebox {
  display: flex;
  align-items: center;
  width: 125px;
  height: 22px;
  margin-right: 38px;
  padding-right: 4px;
  border: 1px solid #cdcdd0;
  background: #fff;
}
.namebox input { flex: 1; width: 80px; padding: 2px 4px 0 0; border: 0; background: none; text-align: center; font: 15px "Liberation Serif", serif; }
.fx { width: 38px; font: italic 17px "Liberation Serif", serif; color: #606060; }
.formula .fxinput { flex: 1; min-width: 0; height: 22px; margin-left: 7px; padding: 0 10px; border: 1px solid #cdcdd0; background: #fff; color: #000; font-size: 15px; }
.sheetrow { display: flex; flex: 1; min-height: 0; }
.sheet { position: relative; flex: 1; min-width: 0; overflow: hidden; background: #fff; }
.grid { width: 100%; table-layout: fixed; border-spacing: 0; font: 300 23px/22px "Liberation Serif", "Noto Sans CJK SC", serif; color: #000; }
.c-num { width: 48px; }
.c-a { width: 53px; }
.c-b { width: 166px; }
.c-c { width: 184px; }
.c-d { width: 146px; }
.grid th, .grid td { height: 27px; padding: 4px 0 0; border: solid #c6c6c8; border-width: 0 1px 1px 0; white-space: nowrap; }
.grid th { background: #f0f0f0; color: #5c5c5c; font-weight: 400; }
.grid thead th { height: 28px; font-size: 21px; }
.grid .sel { background: #d6e5cf; color: #3c9618; border-right-color: #5ba636; }
.grid thead .sel { border-bottom: 2px solid #5ba636; border-right-color: #c6c6c8; }
.grid tbody .sel { border-right-width: 2px; }
.corner svg { margin: 0 0 0 28px; }
.grid .long { padding-left: 3px; }
.latin { font-size: 19px; line-height: 20px; }
.fill td { text-align: center; }
.fill td:nth-child(2), .fill td:nth-child(3), .fill td:nth-child(4) { border-right-color: #000; }
.before td:nth-child(3), .before td:nth-child(4), .fill td:nth-child(3), .fill td:nth-child(4) { border-bottom-color: #000; }
.fill td:nth-child(3), .fill td:nth-child(4) { background: #ff0; }
.fill .n { font-size: 19px; }
.grid .cur { position: relative; }
.cur::before { content: ""; position: absolute; inset: -2px; border: 3px solid #5ba636; }
.cur::after { content: ""; position: absolute; right: -3px; bottom: -3px; width: 6px; height: 6px; border: solid #fff; border-width: 1px 0 0 1px; background: #5ba636; }
.chart { position: absolute; left: 500px; top: 56px; font-family: "Noto Sans", "Noto Sans CJK SC", sans-serif; font-weight: 300; }
.labels { font-weight: 400; }
.arrow { position: absolute; left: 807px; top: 270px; }

/* scroll bars */
.tri { border: 5px solid transparent; }
.up { border-bottom-color: #5e5e5e; border-top: 0; }
.down { border-top-color: #5e5e5e; border-bottom: 0; }
.left { border-right-color: #5e5e5e; border-left: 0; }
.right { border-left-color: #5e5e5e; border-right: 0; }
.vscroll { display: flex; flex: none; flex-direction: column; align-items: center; width: 19px; padding: 7px 0; background: #c5c5c7; }
.split { width: 13px; height: 2px; margin-bottom: 13px; background: #909092; }
.vthumb { display: flex; flex-direction: column; align-items: center; justify-content: center; gap: 3px; width: 13px; height: 28px; margin: auto 0 10px; background: #f3f3f3; }
.vthumb i { width: 6px; height: 1px; background: #999; }
.tabs { display: flex; flex: none; align-items: center; height: 25px; background: #c5c5c7; }
.tabnav { display: flex; align-items: center; gap: 9px; width: 74px; padding-left: 9px; }
.tabnav button:last-child { margin-left: 3px; }
.tab { width: 68px; height: 25px; padding: 2px 0 0 4px; border-right: 1px solid #b7b7b9; }
.tab.active { background: #fff; color: #4b9a28; border-right-color: #fff; }
.addtab { width: 30px; }
.hscroll { display: flex; align-items: center; gap: 10px; width: 421px; margin-left: auto; margin-right: 25px; }
.grip { flex: none; width: 2px; height: 13px; background: #909092; }
.track { flex: 1; margin: 0 2px; }
.hthumb { display: flex; align-items: center; justify-content: center; gap: 3px; width: 50%; height: 13px; background: #f3f3f3; }
.hthumb i { width: 1px; height: 8px; background: #888; }

/* task pane */
.strip { display: flex; flex: none; flex-direction: column; width: 41px; padding-left: 1px; background: #ebeced; }
.handle { display: flex; flex: none; align-items: center; justify-content: center; height: 29px; }
.handle i { width: 16px; height: 3px; border: solid #d0d2dc; border-width: 1px 0; }
.strip button { flex-direction: column; gap: 2px; height: 50px; padding: 4px 2px 0 0; }
.strip .active { background: #fff; }
.strip button:disabled { color: #a2a2a4; }
.panel { display: flex; flex: none; flex-direction: column; width: 260px; background: #fff; }
.panel-head { display: flex; flex: none; align-items: center; justify-content: space-between; height: 29px; padding: 0 7px 0 8px; }
.panel-head span { display: flex; gap: 12px; }
.panel-head button { gap: 5px; }
.panel h2 { margin: 10px 0 0 10px; font-size: 14px; line-height: 20px; font-weight: 400; color: #4b9a28; }
.recent { align-self: center; width: 100px; height: 37px; margin: 54px 0 76px 13px; background: #4686d9; color: #fff; }
.newlist { margin: 5px 0 0; padding: 0 0 0 21px; list-style: none; }
.newlist button { gap: 9px; height: 34px; }
.edge { display: flex; flex: none; flex-direction: column; width: 7px; background: #dcdcde; }
.edge button { height: 98px; margin-top: 264px; background: #5aa532; }
.edge i { border: 3px solid transparent; border-left-color: #fff; border-right: 0; }

/* status bar */
.status { display: flex; flex: none; align-items: center; height: 22px; background: #dedee0; }
.macro { margin-left: 131px; }
.views { display: flex; margin-left: auto; }
.views button { gap: 8px; width: 37px; height: 22px; }
.views button:nth-child(3) { margin-left: 5px; }
.views button:nth-child(n+3) { width: 40px; }
.zoom { display: flex; align-items: center; gap: 6px; padding: 0 6px 0 5px; }
.zoom output { width: 37px; }
.zoom input { width: 136px; height: 14px; margin: 0; appearance: none; background: linear-gradient(90deg, #5aa532 57%, #8a8a92 57%) center / 100% 2px no-repeat; }
.zoom input::-webkit-slider-thumb { appearance: none; width: 14px; height: 14px; border: 1px solid #77777d; border-radius: 50%; background: #eee; }

/* floating input-method bar */
.ime {
  position: absolute;
  right: 4px;
  top: 388px;
  display: grid;
  grid-template-columns: 14px 51px 1fr;
  align-items: center;
  width: 100px;
  height: 39px;
  padding: 2px 2px 2px 3px;
  border-radius: 3px;
  background: linear-gradient(#08891a, #005c08 50%, #007a10);
  color: #fff;
  overflow: hidden;
}
.ime > svg { justify-self: center; }
.mode { border: 1px solid #05630b; background: #078a16; text-align: center; line-height: 15px; }
.imerow { display: flex; align-items: center; justify-content: space-between; padding: 0 0 0 4px; }
.meter {
  position: absolute;
  right: 0;
  top: 362px;
  width: 9px;
  height: 60px;
  border: 2px solid #454d60;
  border-left-width: 3px;
  border-right: 0;
  border-radius: 4px 0 0 4px;
  background: repeating-linear-gradient(transparent 0 1px, #454d60 1px 3px), linear-gradient(#454d60 15%, #d9916c 20%, #d8d273 50%, #5bd0b0);
}

/* watermark */
.mark { position: absolute; right: 68px; bottom: 26px; pointer-events: none; }
.bd { font-family: "Liberation Sans", "Noto Sans CJK SC", sans-serif; font-weight: 700; }
.url { font-family: "Noto Sans", sans-serif; fill: #fff; stroke: #d2d2d2; stroke-width: 2px; paint-order: stroke; }
```
